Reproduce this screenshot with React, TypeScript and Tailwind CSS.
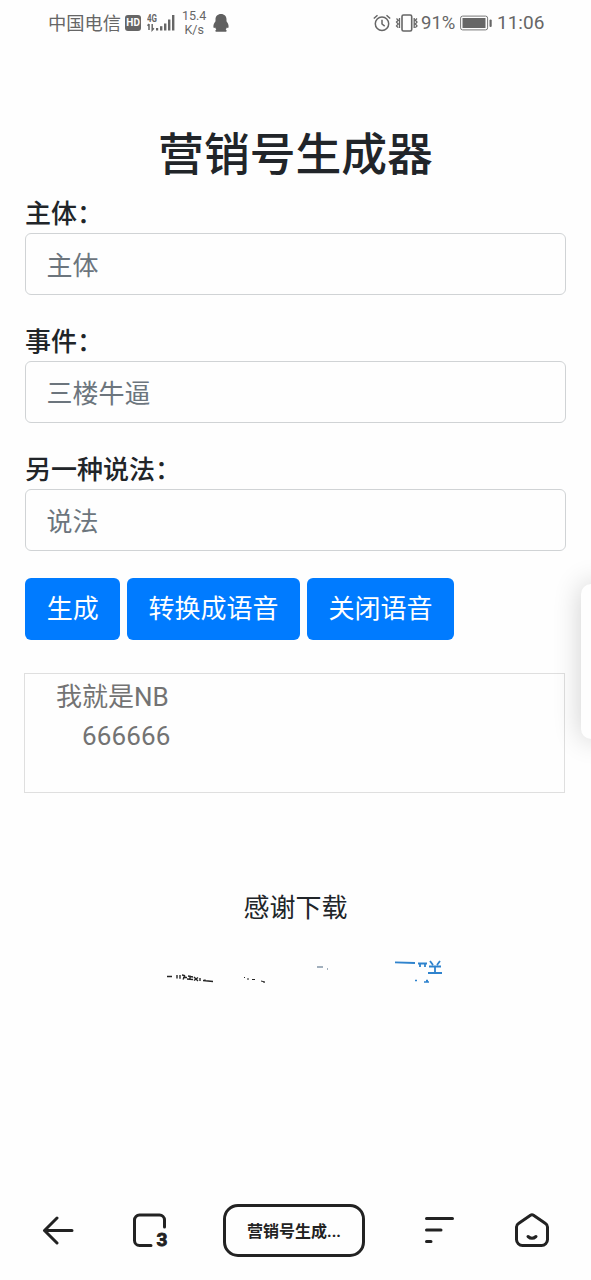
import { useState } from 'react'
import type { ReactNode } from 'react'

interface FieldProps {
  label: string
  placeholder: string
}

export default function App() {
  return (
    <div className="relative flex h-[1280px] w-[591px] flex-col overflow-hidden bg-[#fefefe] font-['Roboto','Noto_Sans_CJK_SC',sans-serif] text-[#212529]">
      <StatusBar />

      <main className="flex flex-1 flex-col pr-[25px] pl-[25px]">
        <h1 className="mt-[83px] text-center text-[45.8px] leading-[55px] font-medium">营销号生成器</h1>

        <div className="mt-[11px] flex flex-col gap-[27px]">
          <Field label="主体：" placeholder="主体" />
          <Field label="事件：" placeholder="三楼牛逼" />
          <Field label="另一种说法：" placeholder="说法" />
        </div>

        <div className="mt-[27px] flex gap-[6.5px]">
          <Button>生成</Button>
          <Button>转换成语音</Button>
          <Button>关闭语音</Button>
        </div>

        {/* Generated text */}
        <div className="mt-[33px] -ml-px h-[120px] w-[541px] border border-[#dfdfdf] pt-[4px] pl-[31px] text-[26px] leading-[39px] text-[#737373]">
          <p>我就是NB</p>
          <p className="pl-[26px] tracking-[0.15px]">666666</p>
        </div>

        <p className="mt-[96px] text-center text-[26px] leading-[39px]">感谢下载</p>
        <FooterFragments />
      </main>

      <BottomBar />

      {/* Edge drawer handle */}
      <div className="absolute top-[584px] left-[581px] h-[155px] w-8 rounded-[10px] bg-[#fefefe] shadow-[0_0_28px_rgba(0,0,0,0.19)]" />
    </div>
  )
}

function Field({ label, placeholder }: FieldProps) {
  const [value, setValue] = useState('')

  return (
    <label className="block">
      <span className="block h-[39px] text-[26px] leading-[41px] font-medium">{label}</span>
      <input
        value={value}
        onChange={(e) => setValue(e.target.value)}
        placeholder={placeholder}
        className="block h-[62px] w-[541px] rounded-[6px] border-[1.5px] border-[#d0d3d5] bg-transparent px-[20.5px] pt-[3px] text-[26px] outline-none placeholder:text-[#6c757d]"
      />
    </label>
  )
}

function Button({ children }: { children: ReactNode }) {
  return (
    <button className="h-[62px] rounded-[6px] bg-[#007bff] px-[21.7px] text-[26px] leading-[39px] text-white">
      {children}
    </button>
  )
}

function StatusBar() {
  return (
    <header className="flex h-[45px] shrink-0 items-center justify-between pr-[47px] pl-[48px] text-[#666]">
      <div className="flex items-center">
        <span className="pt-[2px] text-[18.3px] leading-[24px]">中国电信</span>
        <span className="ml-[4px] flex h-[16px] w-[16px] items-center justify-center rounded-[3px] bg-[#666] text-[10px] font-bold text-white">
          HD
        </span>
        <SignalIcon />
        <span className="ml-[4px] w-[26px] text-center text-[12.5px] leading-[14px]">
          15.4
          <br />
          K/s
        </span>
        <PenguinIcon />
      </div>
      <div className="flex items-center text-[19px] leading-[24px]">
        <AlarmIcon />
        <VibrateIcon />
        <span className="ml-[2px] w-[37px] text-[18.5px]">91%</span>
        <BatteryIcon />
        <span className="ml-[4px] w-[47px]">11:06</span>
      </div>
    </header>
  )
}

function SignalIcon() {
  return (
    <svg viewBox="0 0 30 20" fill="#666" className="ml-[6px] h-[20px] w-[30px]">
      <text x="0" y="8.5" fontSize="10" fontWeight="700" textLength="10" lengthAdjust="spacingAndGlyphs">
        4G
      </text>
      <path d="M2 11v6M.5 12.7 2 11M5.2 11v6l1.7-1.8" fill="none" stroke="#666" strokeWidth="1.5" />
      <rect x="9" y="15" width="2.2" height="2.5" />
      <rect x="13" y="13.2" width="2.4" height="4.3" />
      <rect x="17" y="10.5" width="2.4" height="7" />
      <rect x="21" y="6.5" width="2.4" height="11" />
      <rect x="25" y="2" width="2.4" height="15.5" />
    </svg>
  )
}

function PenguinIcon() {
  return (
    <svg viewBox="0 0 16 18" fill="#606060" className="ml-[6px] h-[18px] w-[16px]">
      <path d="M8 0C4.600 0 2.500 2.300 2.500 5.500v1.700C1 9 .3 11 .4 13c.1 1.200.9 1.300 1.800.6.200.7.600 1.300 1.100 1.800-1.600.9-1.100 2.400.6 2.400h8.200c1.700 0 2.200-1.500.6-2.400.5-.5.900-1.100 1.100-1.800.9.700 1.700.6 1.800-.6.100-2-.6-4-2.100-5.800V5.500C13.500 2.300 11.400 0 8 0Z" />
    </svg>
  )
}

function AlarmIcon() {
  return (
    <svg viewBox="0 0 18 18" fill="none" stroke="#666" strokeWidth="1.5" className="h-[18px] w-[18px]">
      <circle cx="9" cy="9.8" r="6.7" />
      <path d="M9 5.800v4.200l2.700 2.200M.8 4.500 4.500 1.300M17.200 4.500l-3.700-3.200" />
    </svg>
  )
}

function VibrateIcon() {
  return (
    <svg viewBox="0 0 24 18" fill="none" stroke="#666" strokeWidth="1.6" className="ml-[4px] h-[18px] w-[24px]">
      <rect x="7" y="1" width="9.7" height="16" rx="1.5" />
      <path d="m1.500 4.500 1.700 1.700-1.700 1.900 1.700 1.900-1.700 1.900 1.700 1.700M4.500 4v10M22 4.500l-1.700 1.700 1.700 1.900-1.700 1.900 1.700 1.900-1.700 1.700M19.200 4v10" strokeWidth="1.3" />
    </svg>
  )
}

function BatteryIcon() {
  return (
    <svg viewBox="0 0 33 16" fill="none" className="ml-[2px] h-[16px] w-[33px]">
      <rect x=".6" y="1.1" width="27" height="13.8" rx="2" stroke="#777" strokeWidth="1" />
      <rect x="2.5" y="3" width="23" height="10" fill="#666" />
      <rect x="29.5" y="4.5" width="2.2" height="7.5" rx="1" fill="#666" />
    </svg>
  )
}

// Worn-away marks left under the thank-you line
function FooterFragments() {
  return (
    <svg viewBox="0 0 290 30" fill="none" className="mt-[27px] ml-[135px] h-[30px] w-[290px]">
      <g stroke="#252525" strokeWidth="1.4">
        <path d="M7 21.500h5M17 20v3.500M20 20v3.800M22 20l3 .6M23 22.500h4M25 20.500l-2 4M28 21l5 1M27 24l6 .5M30 20.500v4M34 22l4 4M38 22.500l-4 3M40 23v3M43 25.500l10 1M45 24.500v2" />
        <path d="M84 22.500h1M87 24h2M92 24.500h3M101 26l4 1M104 27v1" strokeWidth="1" />
        <path d="M157 12h6M167 14h1" stroke="#47627c" strokeWidth="1.2" />
      </g>
      <g stroke="#2f83cd" strokeWidth="1.8">
        <path d="M235 7.300l20 .7M258 8.500h9M260 8v4M265 8v4M270 6l3 4M280 6l-3 4M269 11.500h12M275 11v7M268 18h14" />
        <path d="M255 25.500h2M264 27h5M266 25.500h2" strokeWidth="1.3" />
      </g>
    </svg>
  )
}

function BottomBar() {
  return (
    <nav className="flex h-[100px] shrink-0 items-center pl-[42px] text-[#222]">
      <svg viewBox="0 0 32 30" fill="none" stroke="currentColor" strokeWidth="3" strokeLinecap="round" strokeLinejoin="round" className="h-[30px] w-[32px]">
        <path d="M30 15.500H2.500M15 3 2.500 15.500 15 28" />
      </svg>

      <svg viewBox="0 0 38 36" fill="none" stroke="currentColor" strokeWidth="3" strokeLinecap="round" className="ml-[58px] h-[36px] w-[38px] overflow-visible">
        <path d="M32.500 15V8a5 5 0 0 0-5-5H7.500a5 5 0 0 0-5 5v20.500a5 5 0 0 0 5 5H19" />
        <text x="24.5" y="34" fill="currentColor" stroke="currentColor" strokeWidth="0.8" fontSize="18.5" fontWeight="700" textLength="11" lengthAdjust="spacingAndGlyphs">
          3
        </text>
      </svg>

      <button className="ml-[53px] h-[53px] w-[142px] rounded-[15px] border-[3px] border-[#222] pt-[2px] font-['Noto_Sans_CJK_SC',sans-serif] text-[16px] font-bold whitespace-nowrap">
        营销号生成<span className="font-['Roboto']">...</span>
      </button>

      <svg viewBox="0 0 32 30" fill="none" stroke="currentColor" strokeWidth="3" strokeLinecap="round" className="ml-[59px] h-[30px] w-[32px]">
        <path d="M2.500 3.500h26M2.500 15h14.500M2.500 26.500h4.500" />
      </svg>

      <svg viewBox="0 0 36 36" fill="none" stroke="currentColor" strokeWidth="3" strokeLinecap="round" strokeLinejoin="round" className="ml-[58px] h-[36px] w-[36px]">
        <path d="M16.500 3.300 4.500 11.500q-2 1.300-2 3.500v12.500a6 6 0 0 0 6 6h19a6 6 0 0 0 6-6V15q0-2.200-2-3.500l-12-8.200q-1.500-1-3 0Z" />
        <path d="M14 24.500q4 3.500 8 0" />
      </svg>
    </nav>
  )
}
